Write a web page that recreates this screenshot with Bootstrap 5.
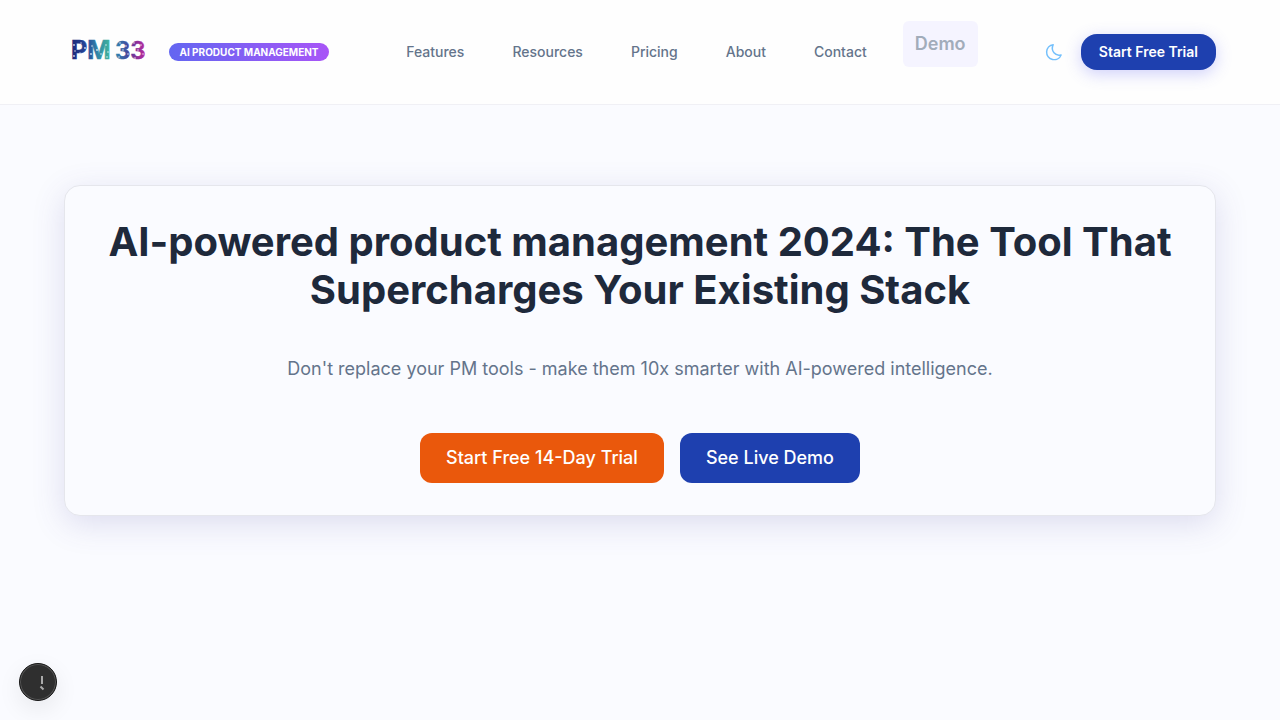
<!DOCTYPE html>
<html lang="en">
<head>
<meta charset="utf-8">
<meta name="viewport" content="width=device-width, initial-scale=1">
<title>PM33 - AI Product Management</title>
<link href="https://cdn.jsdelivr.net/npm/bootstrap@5.3.0/dist/css/bootstrap.min.css" rel="stylesheet">
<style>
  body { font-family: Inter, "Liberation Sans", sans-serif; background: #fafbff; color: #1e293b; }
  .site-header { background: #fefefe; border-bottom: 1px solid #f0f0f5; padding: 21px 0; }
  .page-wrap { padding-left: 64px; padding-right: 64px; }
  .brand-logo { display: block; width: 89px; height: 32px; }
  .brand-pill { background: linear-gradient(90deg, #6366f1, #a855f7); font-size: 10px; line-height: 10px; font-weight: 700; padding: 4px 8px; min-width: 160px; }
  .site-link { color: #64748b; font-size: 14px; font-weight: 500; line-height: 22px; padding: 8px 12px; text-decoration: none; }
  .demo-link { color: #a2acba; background: #f5f4ff; font-size: 18px; font-weight: 600; line-height: 30px; padding: 8px 12px; border-radius: 6px; margin-bottom: 16px; text-decoration: none; }
  .theme-toggle { width: 22px; height: 22px; color: #74c0fc; }
  .trial-btn { background: #1e40af; color: #fff; font-size: 14px; font-weight: 600; line-height: 20px; padding: 8px 18px; border: 0; border-radius: 16px; box-shadow: 0 4px 16px rgba(99,102,241,.3); }
  .hero-area { padding-top: 80px; padding-bottom: 80px; }
  .hero { padding: 32px; background: #fafbff; border: 1px solid #e5e6ec; border-radius: 16px; box-shadow: 0 8px 32px rgba(79,70,160,.17); }
  .hero-title { font-size: 40px; line-height: 48px; font-weight: 700; margin-bottom: 40px; }
  .hero-text { font-size: 18px; line-height: 29px; color: #64748b; margin-bottom: 50px; }
  .hero-btn { font-size: 18px; line-height: 26px; font-weight: 500; padding: 12px 26px; border: 0; border-radius: 12px; color: #fff; }
  .btn-warm, .btn-warm:hover { background: #ea580c; color: #fff; }
  .btn-deep, .btn-deep:hover { background: #1e40af; color: #fff; }
  .dev-badge { left: 19px; bottom: 19px; width: 38px; height: 38px; background: #2f2f2f; border: 1px solid #171717; box-shadow: inset 0 0 0 1px #555, 0 8px 24px rgba(0,0,0,.08); }
</style>
</head>
<body class="min-vh-100">
<header class="site-header">
  <div class="page-wrap d-flex align-items-center justify-content-between">
    <div class="d-flex align-items-center gap-3">
      <a href="#" aria-label="PM33 home">
        <svg class="brand-logo" viewBox="0 0 89 32">
          <defs>
            <linearGradient id="ink" gradientUnits="userSpaceOnUse" x1="8" y1="0" x2="81" y2="0">
              <stop offset="0" stop-color="#1e2a78"/><stop offset=".2" stop-color="#25469a"/><stop offset=".35" stop-color="#3087a8"/><stop offset=".5" stop-color="#3fae9c"/><stop offset=".62" stop-color="#2f7fae"/><stop offset=".78" stop-color="#46419a"/><stop offset=".88" stop-color="#8b2f98"/><stop offset="1" stop-color="#b52a9c"/>
            </linearGradient>
          </defs>
          <g fill="url(#ink)" stroke="url(#ink)" stroke-width=".6" font-family="Inter" font-weight="700" font-size="25"><text x="7" y="23">PM</text><text x="51" y="23" font-size="24" font-weight="600">33</text></g>
          <g fill="#fff" opacity=".8"><circle cx="10" cy="9" r=".9"/><circle cx="11" cy="15" r=".8"/><circle cx="10" cy="20" r=".9"/><circle cx="17" cy="7" r=".7"/><circle cx="21" cy="12" r=".9"/><circle cx="16" cy="17" r=".7"/><circle cx="28" cy="10" r=".8"/><circle cx="27" cy="18" r=".9"/><circle cx="33" cy="14" r=".9"/><circle cx="37" cy="18" r=".8"/><circle cx="42" cy="9" r=".8"/><circle cx="44" cy="16" r=".8"/><circle cx="43" cy="21" r=".8"/><circle cx="56" cy="7" r=".8"/><circle cx="62" cy="10" r=".8"/><circle cx="59" cy="14" r=".8"/><circle cx="64" cy="18" r=".8"/><circle cx="55" cy="21" r=".8"/><circle cx="70" cy="7" r=".8"/><circle cx="77" cy="9" r=".8"/><circle cx="74" cy="14" r=".8"/><circle cx="79" cy="18" r=".8"/><circle cx="71" cy="22" r=".8"/></g>
        </svg>
      </a>
      <span class="brand-pill badge rounded-pill">AI PRODUCT MANAGEMENT</span>
    </div>
    <nav class="d-flex align-items-center gap-4" aria-label="Main">
      <a class="site-link" href="#">Features</a>
      <a class="site-link" href="#">Resources</a>
      <a class="site-link" href="#">Pricing</a>
      <a class="site-link" href="#">About</a>
      <a class="site-link" href="#">Contact</a>
      <a class="demo-link" href="#">Demo</a>
    </nav>
    <div class="d-flex align-items-center gap-3">
      <button class="theme-toggle btn p-0 border-0 d-flex align-items-center justify-content-center" type="button" aria-label="Toggle theme">
        <svg width="20" height="20" viewBox="0 0 24 24" fill="none" stroke="currentColor" stroke-width="1.800" stroke-linecap="round" stroke-linejoin="round"><path d="M11 3.200A9 9 0 1 0 20.500 15.500C14 17.500 7.500 11 11 3.200Z"/></svg>
      </button>
      <button class="trial-btn" type="button">Start Free Trial</button>
    </div>
  </div>
</header>
<main class="page-wrap hero-area">
  <section class="hero text-center">
    <h1 class="hero-title">AI-powered product management 2024: The Tool That Supercharges Your Existing Stack</h1>
    <p class="hero-text">Don't replace your PM tools - make them 10x smarter with AI-powered intelligence.</p>
    <div class="d-flex flex-wrap justify-content-center gap-3">
      <button class="btn hero-btn btn-warm" type="button">Start Free 14-Day Trial</button>
      <button class="btn hero-btn btn-deep" type="button">See Live Demo</button>
    </div>
  </section>
</main>
<button class="dev-badge position-fixed rounded-circle p-0" type="button" aria-label="Developer tools">
  <svg class="d-block" width="36" height="36" viewBox="0 0 36 36" fill="none"><path d="M22 12v8" stroke="#aaa" stroke-width="2"/><path d="M20.500 22.500l3 3" stroke="#aaa" stroke-width="2"/></svg>
</button>
<script src="https://cdn.jsdelivr.net/npm/bootstrap@5.3.0/dist/js/bootstrap.bundle.min.js"></script>
</body>
</html>
